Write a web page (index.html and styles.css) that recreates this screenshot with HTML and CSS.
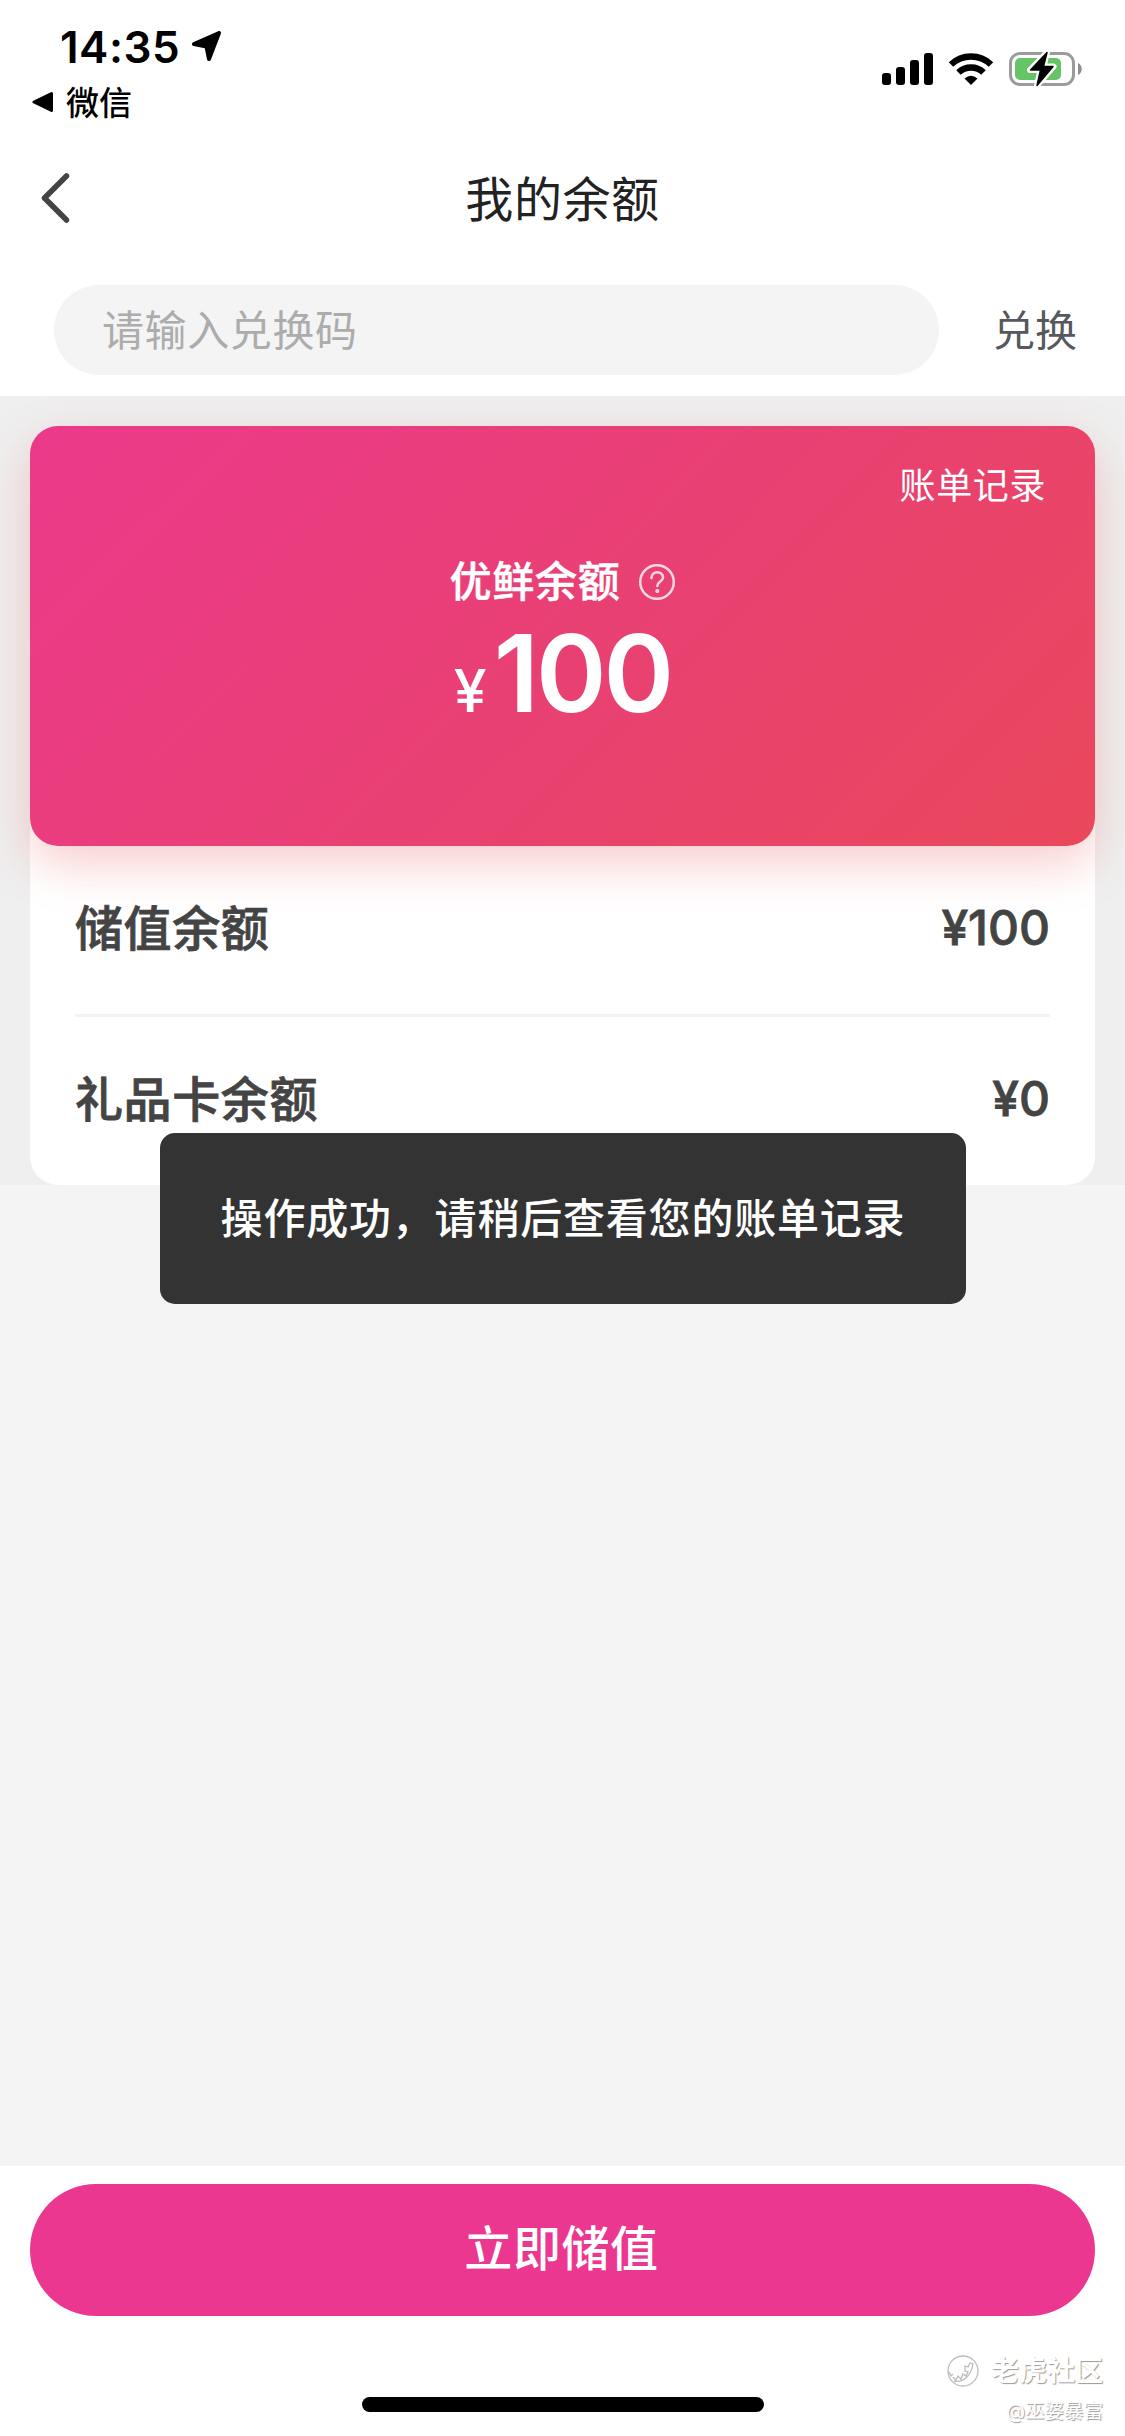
FILE: index.html
```html
<!DOCTYPE html>
<html lang="zh-CN">
<head>
    <meta charset="UTF-8">
    <meta name="viewport" content="width=device-width, initial-scale=1.0">
    <title>我的余额</title>
    <link rel="stylesheet" href="styles.css">
</head>
<body>
    <div class="page">
        <header class="status-bar">
            <div class="status-left">
                <div class="time-row">
                    <span class="time">14:35</span>
                    <svg class="location" width="32" height="32" viewBox="0 0 32 32">
                        <path d="M3 13 L28 2 L18 28 L15.500 15.500 Z" fill="#000" stroke="#000" stroke-width="4" stroke-linejoin="round"/>
                    </svg>
                </div>
                <div class="back-app">
                    <svg width="22" height="22" viewBox="0 0 22 22">
                        <path d="M2 11 L19.500 2.500 V19.500 Z" fill="#000" stroke="#000" stroke-width="3" stroke-linejoin="round"/>
                    </svg>
                    <span>微信</span>
                </div>
            </div>
            <div class="status-right">
                <svg width="51" height="34" viewBox="0 0 51 34">
                    <rect x="0" y="21" width="9" height="12" rx="3"/>
                    <rect x="14" y="15" width="9" height="18" rx="3"/>
                    <rect x="28" y="8" width="9" height="25" rx="3"/>
                    <rect x="42" y="1" width="9" height="32" rx="3"/>
                </svg>
                <svg class="wifi" width="46" height="34" viewBox="0 0 46 34">
                    <g fill="none" stroke="#000" stroke-width="6.500">
                        <path d="M3 12.500 A29 29 0 0 1 43 12.500"/>
                        <path d="M10.500 20.500 A18 18 0 0 1 35.500 20.500"/>
                    </g>
                    <path d="M16.500 26.500 Q23 21 29.500 26.500 L23 33 Z"/>
                </svg>
                <svg class="battery" width="74" height="38" viewBox="0 0 74 38">
                    <rect x="1.500" y="3.500" width="63" height="31" rx="9.500" fill="none" stroke="#9b9b9b" stroke-width="3"/>
                    <rect x="6" y="8" width="46" height="22" rx="5" fill="#67c466"/>
                    <path d="M69 13 C74 15 74 23 69 25 Z" fill="#8e8e8e"/>
                    <path d="M38 2.500 L21 20 H31.500 L28 35.500 L44.500 16.500 H34.500 Z" fill="#000" stroke="#fff" stroke-width="6" stroke-linejoin="round"/>
                    <path d="M38 2.500 L21.500 20 H31.500 L28 35.500 L44 16.500 H34.500 Z" fill="#000" stroke="#000" stroke-width="1.500" stroke-linejoin="round"/>
                </svg>
            </div>
        </header>

        <nav class="nav-bar">
            <svg class="back" width="29" height="52" viewBox="0 0 29 52">
                <path d="M25.500 4 L3.500 26 L25.500 48" fill="none" stroke="#444" stroke-width="5.500" stroke-linecap="round" stroke-linejoin="round"/>
            </svg>
            <h1 class="title">我的余额</h1>
        </nav>

        <form class="redeem">
            <input class="code" type="text" placeholder="请输入兑换码">
            <button class="redeem-btn" type="button">兑换</button>
        </form>

        <main class="content">
            <section class="panel">
                <div class="card">
                    <a class="records">账单记录</a>
                    <div class="card-label">
                        <span>优鲜余额</span>
                        <svg width="38" height="38" viewBox="0 0 38 38" fill="none" stroke="#fff" stroke-width="2.500" stroke-linecap="round" opacity="0.800">
                            <circle cx="19" cy="19" r="16.800"/>
                            <path d="M13.500 15 C13.500 7.500 25 7.500 25 14.500 C25 18.500 19.300 18.500 19.300 23"/>
                            <circle cx="19.300" cy="28" r="0.800" fill="#fff"/>
                        </svg>
                    </div>
                    <div class="amount"><span class="yen">¥</span><span class="number">100</span></div>
                </div>
                <ul class="balances">
                    <li><span>储值余额</span><span class="value">¥100</span></li>
                    <li><span>礼品卡余额</span><span class="value">¥0</span></li>
                </ul>
            </section>
        </main>

        <footer class="footer">
            <button class="topup" type="button">立即储值</button>
        </footer>

        <div class="toast">操作成功，请稍后查看您的账单记录</div>
        <div class="home-indicator"></div>
        <div class="watermark">
            <div class="brand">
                <svg width="34" height="34" viewBox="0 0 34 34" fill="none" stroke="#bcbcc0" stroke-width="1.300">
                    <circle cx="17" cy="17" r="15"/>
                    <path d="M3 18 L5 22 L7 20 M8 27 C17 29 25 22 27 10 L24 9 L22 13 L19 12 L19 17 L22 18 L20 22 L17 20 L15 25 L12 22 L10 26 L7 23"/>
                </svg>
                <span>老虎社区</span>
            </div>
            <div class="author">@巫婆暴富</div>
        </div>
    </div>
</body>
</html>
```
FILE: styles.css
```css
* {
    box-sizing: border-box;
}

body {
    margin: 0;
    background-color: #fff;
    font-family: Inter, "Noto Sans CJK SC", sans-serif;
}

.page {
    position: relative;
    display: flex;
    flex-direction: column;
    width: 1125px;
    height: 2436px;
    overflow: hidden;
}

.status-bar {
    display: flex;
    justify-content: space-between;
    height: 132px;
    padding: 20px 42px 0 32px;
}

.time-row {
    display: flex;
    align-items: center;
    height: 54px;
    padding-left: 28px;
}

.time {
    font-size: 44px;
    font-weight: 600;
    letter-spacing: 0.5px;
}

.location {
    margin-left: 11px;
}

.back-app {
    display: flex;
    align-items: center;
    gap: 12px;
    height: 56px;
    font-size: 33px;
    font-weight: 500;
}

.back-app span {
    padding-bottom: 2px;
}

.status-right {
    display: flex;
    align-items: center;
    height: 98px;
}

.wifi {
    margin-left: 15px;
}

.battery {
    margin-left: 15px;
}

.nav-bar {
    display: grid;
    grid-template-columns: 180px 1fr 180px;
    align-items: center;
    height: 132px;
}

.back {
    margin-left: 41px;
}

.title {
    margin: 0;
    padding-bottom: 5px;
    color: #222;
    font-size: 48px;
    font-weight: 400;
    letter-spacing: 0.6px;
    text-align: center;
}

.redeem {
    display: flex;
    flex: none;
    height: 132px;
    padding: 21px 48px 21px 54px;
}

.code {
    width: 885px;
    height: 90px;
    padding: 0 48px;
    border: none;
    border-radius: 45px;
    background-color: #f4f4f4;
    font: 400 42px Inter, "Noto Sans CJK SC", sans-serif;
    letter-spacing: 0.6px;
}

.code::placeholder {
    color: #acacac;
}

.redeem-btn {
    flex: 1;
    padding: 0 0 5px;
    border: none;
    background: none;
    color: #56585c;
    font: 400 42px Inter, "Noto Sans CJK SC", sans-serif;
    text-align: right;
    white-space: nowrap;
}

.content {
    flex: 1;
    background-color: #f4f4f4;
}

.panel {
    height: 789px;
    padding: 30px 30px 0;
    background-color: #efefef;
    overflow: hidden;
}

.card {
    position: relative;
    z-index: 1;
    display: flex;
    flex-direction: column;
    align-items: center;
    height: 420px;
    padding-top: 34px;
    border-radius: 28px;
    background: linear-gradient(135deg, #ec3a8b 0%, #e94074 50%, #ea485c 100%);
    box-shadow: 0 18px 48px rgba(230, 75, 70, 0.27);
    color: #fff;
}

.records {
    align-self: flex-end;
    margin-right: 49px;
    font-size: 36px;
    font-weight: 400;
    line-height: 52px;
    letter-spacing: 0.6px;
}

.card-label {
    display: flex;
    align-items: center;
    gap: 17px;
    margin-top: 42px;
    font-size: 42px;
    font-weight: 500;
    line-height: 56px;
    letter-spacing: 0.8px;
    -webkit-text-stroke: 0.5px #fff;
}

.amount {
    margin-top: 3px;
    font-weight: 600;
    line-height: 120px;
    white-space: nowrap;
}

.yen {
    margin-right: 7px;
    font-size: 59px;
    font-weight: 500;
}

.number {
    font-size: 107px;
    letter-spacing: -3px;
}

.balances {
    height: 367px;
    margin: -28px 0 0;
    padding: 28px 45px 0;
    border-radius: 0 0 28px 28px;
    background-color: #fff;
    list-style: none;
}

.balances li {
    display: flex;
    align-items: center;
    justify-content: space-between;
    height: 168px;
    padding-bottom: 10px;
    color: #444;
    font-size: 48px;
    font-weight: 500;
    letter-spacing: 0.6px;
    -webkit-text-stroke: 0.8px #444;
}

.balances li + li {
    height: 171px;
    border-top: 3px solid #f3f3f3;
}

.value {
    padding-top: 4px;
    letter-spacing: 0;
}

.footer {
    flex: none;
    height: 270px;
    padding: 18px 30px 0;
    background-color: #fff;
}

.topup {
    width: 100%;
    height: 132px;
    padding: 0 2px 11px 0;
    border: none;
    border-radius: 66px;
    background-color: #ec3791;
    color: #fff;
    font: 500 48px Inter, "Noto Sans CJK SC", sans-serif;
    letter-spacing: 0.6px;
}

/* layers above the page */
.toast {
    position: absolute;
    top: 1133px;
    left: 160px;
    width: 806px;
    height: 171px;
    border-radius: 15px;
    background-color: rgba(40, 40, 40, 0.95);
    color: #fff;
    font-family: "Noto Sans CJK SC", sans-serif;
    font-size: 42px;
    font-weight: 500;
    line-height: 165px;
    letter-spacing: 0.8px;
    text-align: center;
    white-space: nowrap;
}

.home-indicator {
    position: absolute;
    bottom: 24px;
    left: 362px;
    width: 402px;
    height: 15px;
    border-radius: 8px;
    background-color: #000;
}

.watermark {
    position: absolute;
    right: 22px;
    bottom: 10px;
    color: #fff;
    text-align: right;
    text-shadow: 1px 1px 1px #999;
    white-space: nowrap;
}

.brand {
    display: flex;
    align-items: center;
    gap: 11px;
    font-size: 28px;
    font-weight: 700;
    line-height: 40px;
}

.author {
    margin-top: 5px;
    font-size: 19.5px;
    line-height: 30px;
}
```
